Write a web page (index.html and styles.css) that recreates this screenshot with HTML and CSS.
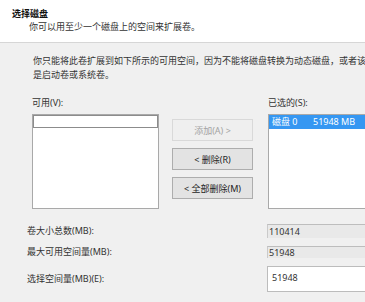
FILE: index.html
```html
<!DOCTYPE html>
<html lang="zh-CN">
<head>
<meta charset="utf-8">
<link rel="stylesheet" href="styles.css">
</head>
<body>
<div class="page">
  <div class="header">
    <div class="title">选择磁盘</div>
    <div class="subtitle">你可以用至少一个磁盘上的空间来扩展卷。</div>
  </div>
  <div class="content">
    <p class="note">你只能将此卷扩展到如下所示的可用空间，因为不能将磁盘转换为动态磁盘，或者该<br>是启动卷或系统卷。</p>
    <div class="lists">
      <div class="lbl">可用(V):</div>
      <div></div>
      <div class="lbl">已选的(S):</div>
      <div class="listbox left-box"><div class="focus-item"></div></div>
      <div class="buttons">
        <button class="btn" disabled>添加(A) &gt;</button>
        <button class="btn">&lt; 删除(R)</button>
        <button class="btn">&lt; 全部删除(M)</button>
      </div>
      <div class="listbox right-box">
        <div class="sel-item"><span class="disk">磁盘 0</span><span>51948 MB</span></div>
      </div>
    </div>
    <div class="sizes">
      <div class="row r1"><span class="rlabel">卷大小总数(MB):</span><span class="field ro h14">110414</span></div>
      <div class="row r2"><span class="rlabel">最大可用空间量(MB):</span><span class="field ro h12">51948</span></div>
      <div class="row r3"><span class="rlabel">选择空间量(MB)(E):</span><span class="field edit">51948</span></div>
    </div>
  </div>
</div>
</body>
</html>
```

FILE: styles.css
```css
html, body {
  margin: 0;
  padding: 0;
}
body {
  width: 365px;
  height: 302px;
  overflow: hidden;
  background: #f0f0f0;
  font-family: "Noto Sans", "Noto Sans CJK SC", sans-serif;
  font-size: 9px;
  color: #1e1e1e;
}
.page {
  width: 365px;
  height: 302px;
  overflow: hidden;
}
.header {
  box-sizing: border-box;
  height: 43px;
  background: #ffffff;
  border-bottom: 1px solid #d6d6d6;
  padding: 7px 0 0 12px;
  line-height: 13px;
}
.title {
  font-weight: bold;
  color: #111;
}
.subtitle {
  padding-left: 17px;
  color: #333;
}
.content {
  white-space: nowrap;
}
.note {
  margin: 11px 0 0 33px;
  line-height: 14px;
  color: #333;
}
.lists {
  display: grid;
  grid-template-columns: 127px 81px 120px;
  grid-template-rows: 14px 95px;
  column-gap: 13px;
  row-gap: 4px;
  margin: 14px 0 0 32px;
}
.lists > :nth-child(3),
.lists > :nth-child(6) {
  margin-left: 2px;
}
.lbl {
  line-height: 14px;
  color: #333;
}
.listbox {
  box-sizing: border-box;
  background: #fff;
  border: 1px solid #a9a9a9;
}
.focus-item {
  height: 11px;
  margin: 0;
  border: 1px solid #8c8c8c;
}
.buttons {
  display: flex;
  flex-direction: column;
  gap: 7px;
  padding-top: 5px;
}
.btn {
  box-sizing: border-box;
  height: 22px;
  width: 81px;
  padding: 0;
  font: inherit;
  color: #1e1e1e;
  background: #e3e3e3;
  border: 1px solid #adadad;
  border-radius: 0;
}
.btn:disabled {
  background: #efefef;
  border-color: #d9d9d9;
  color: #a3a3a3;
}
.sel-item {
  height: 14px;
  line-height: 14px;
  background: #3597f2;
  color: #fff;
  padding-left: 3px;
}
.disk {
  display: inline-block;
  width: 41px;
}
.sizes {
  margin: 15px 0 0 27px;
  display: flex;
  flex-direction: column;
  gap: 8px;
}
.row {
  display: flex;
  align-items: center;
}
.rlabel {
  flex: 0 0 240px;
  width: 240px;
  color: #333;
  line-height: 12px;
}
.field {
  flex: 0 0 120px;
  box-sizing: border-box;
  width: 120px;
}
.ro {
  background: #e9e9e9;
  border-top: 1px solid #bdbdbd;
  border-left: 1px solid #cacaca;
  padding-left: 1px;
  color: #333;
}
.h14 {
  height: 14px;
  line-height: 13px;
}
.h12 {
  height: 12px;
  line-height: 11px;
}
.edit {
  height: 26px;
  line-height: 22px;
  background: #fff;
  border: 1px solid #bcbcbc;
  padding-left: 4px;
  color: #333;
}
```
